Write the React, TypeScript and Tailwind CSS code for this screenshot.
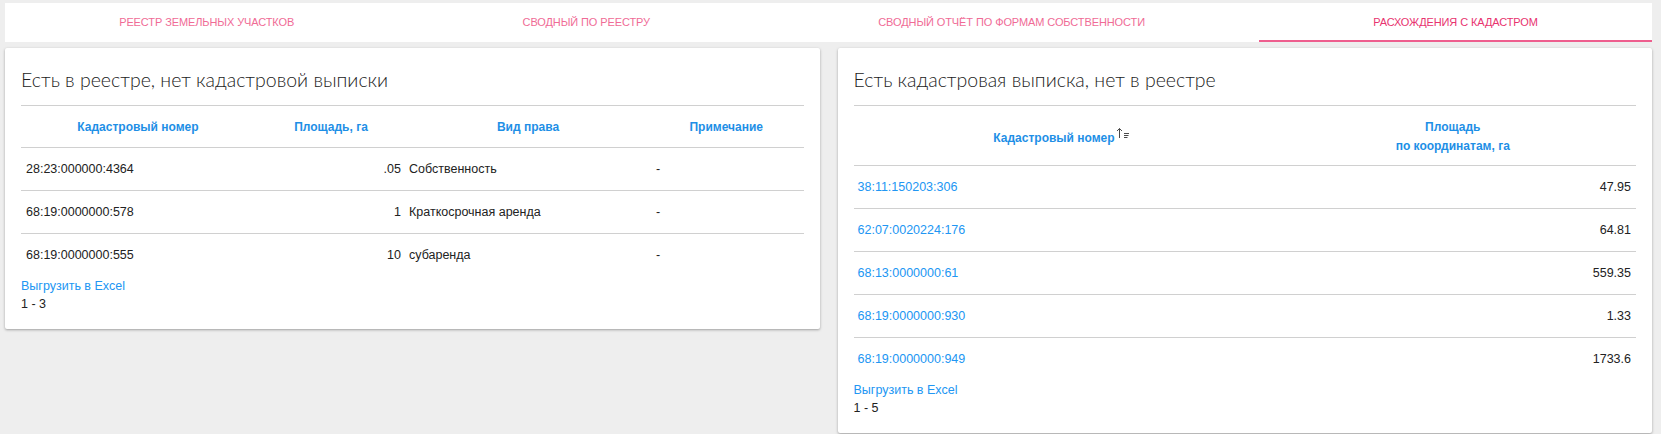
import React from "react";

const font = { fontFamily: '"Liberation Sans", Arial, sans-serif' };
const titleFont = { fontFamily: 'Lato, "Liberation Sans", sans-serif' };

const tabs = [
  "РЕЕСТР ЗЕМЕЛЬНЫХ УЧАСТКОВ",
  "СВОДНЫЙ ПО РЕЕСТРУ",
  "СВОДНЫЙ ОТЧЁТ ПО ФОРМАМ СОБСТВЕННОСТИ",
  "РАСХОЖДЕНИЯ С КАДАСТРОМ",
];

const registryRows = [
  { num: "28:23:000000:4364", area: ".05", right: "Собственность", note: "-" },
  { num: "68:19:0000000:578", area: "1", right: "Краткосрочная аренда", note: "-" },
  { num: "68:19:0000000:555", area: "10", right: "субаренда", note: "-" },
];

const cadastreRows = [
  { num: "38:11:150203:306", area: "47.95" },
  { num: "62:07:0020224:176", area: "64.81" },
  { num: "68:13:0000000:61", area: "559.35" },
  { num: "68:19:0000000:930", area: "1.33" },
  { num: "68:19:0000000:949", area: "1733.6" },
];

const SortIcon = () => (
  <svg width="14" height="12" viewBox="0 0 14 12" className="mb-[8px] ml-[1px]">
    <path d="M3.5 11V1.5M1 4l2.5-2.5L6 4" fill="none" stroke="#4a4a4a" strokeWidth="1" />
    <path d="M8 6.5h5M8 8.5h4.5M8 10.5h3.5" stroke="#4a4a4a" strokeWidth="1" />
  </svg>
);

const Card = ({ title, children }: { title: string; children: React.ReactNode }) => (
  <div className="flex-1 bg-white rounded-[2px] shadow-[0_1px_3px_rgba(0,0,0,0.25),0_1px_2px_rgba(0,0,0,0.1)] p-4">
    <div className="h-[42px] border-b border-[#d0d0d0] pt-[2px]">
      <h2 className="text-[19.5px] leading-[28px] font-light text-[#222]" style={titleFont}>
        {title}
      </h2>
    </div>
    {children}
  </div>
);

const Footer = ({ range }: { range: string }) => (
  <div className="text-[12.5px] leading-[18px]">
    <a className="text-[#2196f3] block">Выгрузить в Excel</a>
    <div className="text-[#222]">{range}</div>
  </div>
);

export default function App() {
  return (
    <div className="min-h-[434px] bg-[#eeeeee] pt-[3px] pl-[5px] pr-[9px]" style={font}>
      <div className="flex bg-white h-[39px]">
        {tabs.map((t, i) => (
          <div
            key={t}
            className={
              "flex-auto flex items-center justify-center text-[11px] tracking-[-0.1px] " +
              (i === 3 ? "border-b-2 border-[#ee5e8e] text-[#e8336f] pt-[2px]" : "text-[#f06b96]")
            }
          >
            {t}
          </div>
        ))}
      </div>

      <div className="flex items-start gap-[18px] mt-[6px]">
        <Card title="Есть в реестре, нет кадастровой выписки">
          <div className="grid grid-cols-[234px_152px_242px_1fr] h-[42px] border-b border-[#d0d0d0] items-center text-[12px] font-bold text-[#1e8fe6]">
            <div className="text-center">Кадастровый номер</div>
            <div className="text-center">Площадь, га</div>
            <div className="text-center">Вид права</div>
            <div className="text-center">Примечание</div>
          </div>
          {registryRows.map((r, i) => (
            <div
              key={r.num}
              className={
                "grid grid-cols-[234px_152px_242px_1fr] h-[43px] items-center text-[12.5px] text-[#222] " +
                (i < registryRows.length - 1 ? "border-b border-[#d0d0d0]" : "")
              }
            >
              <div className="pl-[5px]">{r.num}</div>
              <div className="text-right pr-[6px]">{r.area}</div>
              <div className="pl-[2px]">{r.right}</div>
              <div className="pl-[7px]">{r.note}</div>
            </div>
          ))}
          <Footer range="1 - 3" />
        </Card>

        <Card title="Есть кадастровая выписка, нет в реестре">
          <div className="grid grid-cols-[416px_1fr] h-[60px] border-b border-[#d0d0d0] items-center text-[12px] font-bold text-[#1e8fe6] pt-[3px]">
            <div className="flex items-end justify-center">
              <span>Кадастровый номер</span>
              <SortIcon />
            </div>
            <div className="text-center leading-[19px]">
              Площадь
              <br />
              по координатам, га
            </div>
          </div>
          {cadastreRows.map((r, i) => (
            <div
              key={r.num}
              className={
                "grid grid-cols-[416px_1fr] h-[43px] items-center text-[12.5px] " +
                (i < cadastreRows.length - 1 ? "border-b border-[#d0d0d0]" : "")
              }
            >
              <a className="pl-[4px] text-[#2196f3]">{r.num}</a>
              <div className="text-right pr-[5px] text-[#222]">{r.area}</div>
            </div>
          ))}
          <Footer range="1 - 5" />
        </Card>
      </div>
    </div>
  );
}
